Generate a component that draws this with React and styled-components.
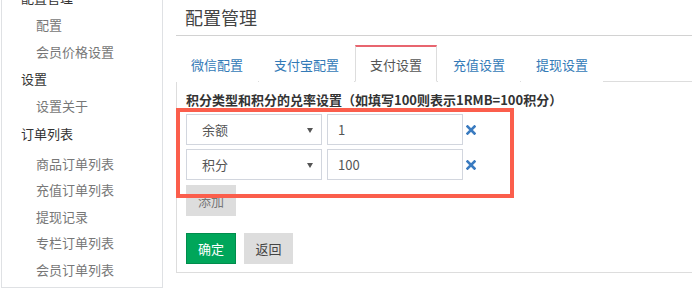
import styled, { createGlobalStyle } from "styled-components";

const GlobalStyle = createGlobalStyle`
  html, body {
    margin: 0;
    padding: 0;
    background: #fff;
    overflow: hidden;
  }
  body {
    font-family: "Noto Sans CJK SC", "Liberation Sans", sans-serif;
    font-size: 13px;
    color: #333;
  }
`;

const Page = styled.div`
  display: flex;
  align-items: flex-start;
  width: 720px;
  height: 297px;
`;

const Sidebar = styled.nav`
  width: 160px;
  margin-left: 1px;
  margin-top: -16px;
  padding-bottom: 4px;
  border: 1px solid #dfe1e4;
  border-top: none;
`;

const Group = styled.div`
  display: flex;
  flex-direction: column;
`;

const GroupTitle = styled.div`
  height: 28px;
  line-height: 28px;
  padding-left: 19px;
  color: #333;
  font-size: 13px;
`;

const SubList = styled.div`
  display: flex;
  flex-direction: column;
  padding-top: ${(p) => p.$offset || 0}px;
`;

const SubItem = styled.a`
  height: 26.5px;
  line-height: 26.5px;
  padding-left: 34px;
  color: #777;
  font-size: 13px;
  text-decoration: none;
`;

const Main = styled.main`
  flex: 1;
  margin-left: 13px;
`;

const Title = styled.h1`
  margin: 0;
  height: 35px;
  line-height: 34px;
  padding-left: 9px;
  font-size: 18px;
  font-weight: normal;
  color: #444;
  border-bottom: 1px solid #d2d2d2;
`;

const Tabs = styled.ul`
  display: flex;
  margin: 9px 0 0;
  padding: 0;
  list-style: none;
  border-bottom: 1px solid #ddd;
`;

const Tab = styled.li`
  height: 34px;
  line-height: 36px;
  margin-right: 1px;
  margin-bottom: -1px;
  padding: 0 14px;
  font-size: 13px;
  color: ${(p) => (p.$active ? "#555" : "#337ab7")};
  background: #fff;
  border: 1px solid ${(p) => (p.$active ? "#ddd" : "transparent")};
  border-top: 2px solid ${(p) => (p.$active ? "#e8656f" : "transparent")};
  border-bottom: 1px solid ${(p) => (p.$active ? "#fff" : "transparent")};
`;

const Panel = styled.section`
  position: relative;
  padding: 8px 0 8px 9px;
  border-left: 1px solid #ddd;
  border-bottom: 1px solid #ddd;
`;

const Heading = styled.div`
  line-height: 20px;
  font-size: 13px;
  font-weight: bold;
  color: #333;
`;

const Rows = styled.div`
  display: flex;
  flex-direction: column;
  gap: 4px;
  margin-top: 4px;
`;

const Row = styled.div`
  display: flex;
  align-items: center;
  gap: 5px;
`;

const SelectBox = styled.div`
  position: relative;
  box-sizing: border-box;
  width: 136px;
  height: 31px;
  line-height: 29px;
  padding-left: 15px;
  border: 1px solid #d2d6de;
  color: #555;
  &::after {
    content: "";
    position: absolute;
    right: 8px;
    top: 13px;
    border-left: 3px solid transparent;
    border-right: 3px solid transparent;
    border-top: 5px solid #555;
  }
`;

const TextInput = styled.input`
  box-sizing: border-box;
  width: 136px;
  height: 31px;
  padding: 0 10px;
  border: 1px solid #d2d6de;
  font-family: inherit;
  font-size: 13px;
  color: #555;
  outline: none;
`;

const RemoveIcon = styled.svg`
  margin-left: -2px;
  display: block;
`;

const Button = styled.button`
  box-sizing: border-box;
  height: 31px;
  padding: 0;
  border: 1px solid ${(p) => (p.$primary ? "#008d4c" : "#ddd")};
  border-radius: 0;
  background: ${(p) => (p.$primary ? "#00a65a" : "#dddddd")};
  color: ${(p) => (p.$primary ? "#fff" : "#444")};
  font-family: inherit;
  font-size: 13px;
  width: ${(p) => p.$width}px;
`;

const AddButton = styled(Button)`
  margin-top: 5px;
  color: #777;
`;

const Actions = styled.div`
  display: flex;
  gap: 8px;
  margin-top: 17px;
`;

const Highlight = styled.div`
  position: absolute;
  left: -1px;
  top: 26px;
  width: 338px;
  height: 90px;
  box-sizing: border-box;
  border: 4px solid #fb5e4c;
  pointer-events: none;
`;

const menu = [
  { title: "配置管理", items: ["配置", "会员价格设置"] },
  { title: "设置", items: ["设置关于"] },
  {
    title: "订单列表",
    offset: 3,
    items: ["商品订单列表", "充值订单列表", "提现记录", "专栏订单列表", "会员订单列表"],
  },
];

const tabs = ["微信配置", "支付宝配置", "支付设置", "充值设置", "提现设置"];

const rates = [
  { type: "余额", value: "1" },
  { type: "积分", value: "100" },
];

function Cross() {
  return (
    <RemoveIcon width="10" height="10" viewBox="0 0 10 10">
      <path d="M1.5 1.5 L8.5 8.5 M8.5 1.5 L1.5 8.5" stroke="#3a7bc0" strokeWidth="2.6" strokeLinecap="square" />
    </RemoveIcon>
  );
}

export default function App() {
  return (
    <>
      <GlobalStyle />
      <Page>
        <Sidebar>
          {menu.map((g) => (
            <Group key={g.title}>
              <GroupTitle>{g.title}</GroupTitle>
              <SubList $offset={g.offset}>
                {g.items.map((it) => (
                  <SubItem key={it}>{it}</SubItem>
                ))}
              </SubList>
            </Group>
          ))}
        </Sidebar>
        <Main>
          <Title>配置管理</Title>
          <Tabs>
            {tabs.map((t) => (
              <Tab key={t} $active={t === "支付设置"}>
                {t}
              </Tab>
            ))}
          </Tabs>
          <Panel>
            <Heading>积分类型和积分的兑率设置（如填写100则表示1RMB=100积分）</Heading>
            <Rows>
              {rates.map((r) => (
                <Row key={r.type}>
                  <SelectBox>{r.type}</SelectBox>
                  <TextInput defaultValue={r.value} />
                  <Cross />
                </Row>
              ))}
            </Rows>
            <AddButton $width={50}>添加</AddButton>
            <Actions>
              <Button $primary $width={50}>确定</Button>
              <Button $width={49}>返回</Button>
            </Actions>
            <Highlight />
          </Panel>
        </Main>
      </Page>
    </>
  );
}
